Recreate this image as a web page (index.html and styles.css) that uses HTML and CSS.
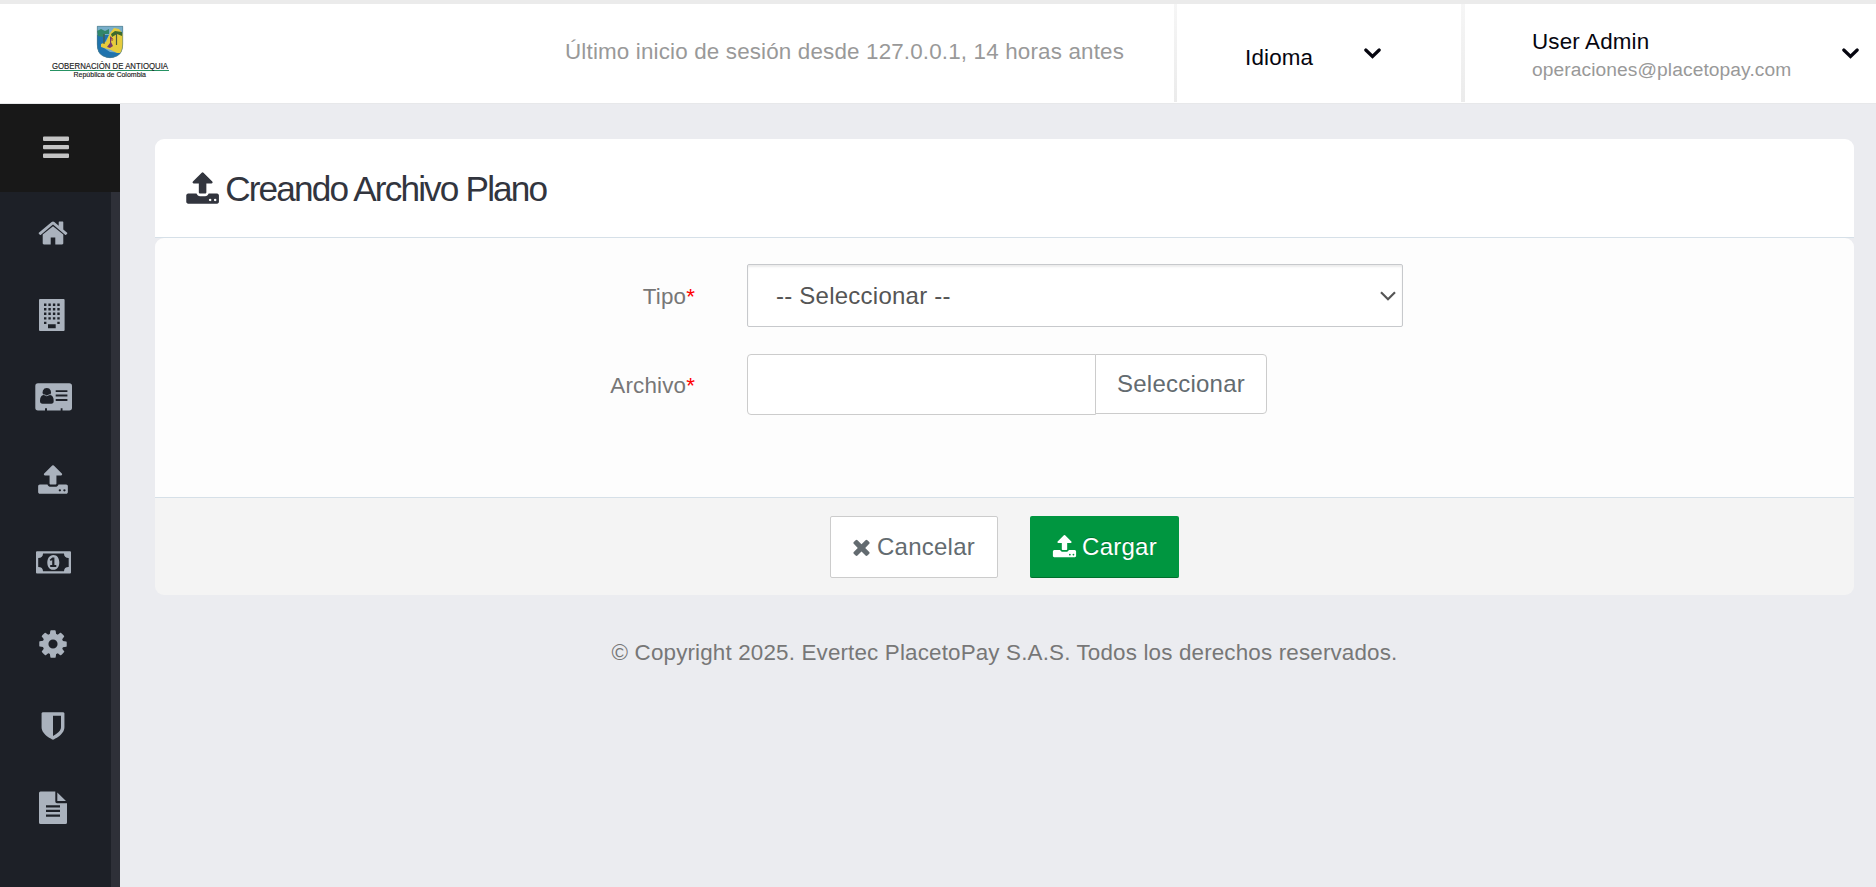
FILE: index.html
```html
<!DOCTYPE html>
<html lang="es">
<head>
<meta charset="utf-8">
<title>Creando Archivo Plano</title>
<link rel="stylesheet" href="styles.css">
</head>
<body>
<svg class="defs" aria-hidden="true">
  <symbol id="upload" viewBox="0 0 1792 1792"><path d="M1344 1472q0-26-19-45t-45-19-45 19-19 45 19 45 45 19 45-19 19-45zm256 0q0-26-19-45t-45-19-45 19-19 45 19 45 45 19 45-19 19-45zm128-224v320q0 40-28 68t-68 28h-1472q-40 0-68-28t-28-68v-320q0-40 28-68t68-28h427q21 56 70.500 92t110.500 36h256q61 0 110.500-36t70.500-92h427q40 0 68 28t28 68zm-325-648q-17 40-59 40h-256v448q0 26-19 45t-45 19h-256q-26 0-45-19t-19-45v-448h-256q-42 0-59-40-17-39 14-69l448-448q18-19 45-19t45 19l448 448q31 30 14 69z"/></symbol>
</svg>
<header class="topbar">
  <div class="brand">
    <svg class="logo" viewBox="0 0 120 56">
      <defs><clipPath id="shield"><path d="M47 0H73V18Q73 27 67 30Q63 32 60 32Q57 32 53 30Q47 27 47 18Z"/></clipPath></defs>
      <g clip-path="url(#shield)">
        <rect x="47" width="26" height="33" fill="#78aeca"/>
        <path d="M47 9H59L54 18L51 20L60 26L73 27V33H47Z" fill="#1f73ad"/>
        <path d="M56 16L60 7L64 2L69 3L73 8V27L67 27L61 24L51 21V18Z" fill="#e6cc3d"/>
        <path d="M47 5L51 3L55 5L59 3L59 8L55 8L53 11L48 10Z" fill="#30866b"/>
        <path d="M61 8L65 5L72 6V10L67 8L62 11Z" fill="#3d6b2c"/>
        <path d="M54 8V18M66.500 7V19" stroke="#4c5940" stroke-width="1.200" fill="none"/>
        <path d="M60 10L62 12L61 16L63 20L60 22L57 21L60 17Z" fill="#763c6b"/>
        <path d="M61 11L63 13L62 15" stroke="#b36535" fill="none"/>
      </g>
      <path d="M47.300 .3H72.700V18Q72.700 27 67 30Q63 31.700 60 31.700Q57 31.700 53 30Q47.300 27 47.300 18Z" fill="none" stroke="#527b85" stroke-width=".6"/>
      <rect x="0" y="44" width="119" height="1" fill="#269263"/>
      <text x="2" y="43" class="logo-name" textLength="116" lengthAdjust="spacingAndGlyphs">GOBERNACIÓN DE ANTIOQUIA</text>
      <text x="23.500" y="51.200" class="logo-sub" textLength="72.500" lengthAdjust="spacingAndGlyphs">República de Colombia</text>
    </svg>
  </div>
  <p class="last-login">Último inicio de sesión desde 127.0.0.1, 14 horas antes</p>
  <div class="language">
    <span>Idioma</span>
    <svg class="chev" viewBox="0 0 17 11"><path d="M1.800 2L8.500 8.500L15.200 2" /></svg>
  </div>
  <div class="user">
    <div class="user-info"><span class="user-name">User Admin</span><span class="user-mail">operaciones@placetopay.com</span></div>
    <svg class="chev" viewBox="0 0 17 11"><path d="M1.800 2L8.500 8.500L15.200 2" /></svg>
  </div>
</header>
<div class="shell">
  <aside class="side">
    <div class="toggle"><svg width="26" height="22" viewBox="0 0 26 22"><path d="M0 1.500Q0 .5 1 .5H25Q26 .5 26 1.500V4Q26 5 25 5H1Q0 5 0 4ZM0 10Q0 9 1 9H25Q26 9 26 10V12.300Q26 13.300 25 13.300H1Q0 13.300 0 12.300ZM0 18.500Q0 17.500 1 17.500H25Q26 17.500 26 18.500V21Q26 22 25 22H1Q0 22 0 21Z"/></svg></div>
    <nav class="menu">
      <a class="item"><svg class="ico" viewBox="0 0 1792 1792"><path d="M1472 992v480q0 26-19 45t-45 19h-384v-384h-256v384h-384q-26 0-45-19t-19-45v-480q0-1 .5-3t.5-3l575-474 575 474q1 2 1 6zm223-69l-62 74q-8 9-21 11h-3q-13 0-21-7l-692-577-692 577q-12 8-24 7-13-2-21-11l-62-74q-8-10-7-23.500t11-21.500l719-599q32-26 76-26t76 26l244 204v-195q0-14 9-23t23-9h192q14 0 23 9t9 23v408l219 182q10 8 11 21.500t-7 23.500z"/></svg></a>
      <a class="item"><svg class="ico wide" viewBox="0 0 40 32"><path fill-rule="evenodd" d="M7 0H30.600Q31.600 0 31.600 1V31Q31.600 32 30.600 32H7Q6 32 6 31V1Q6 0 7 0ZM11 4.500h2.400v2.400h-2.400zM15.400 4.500h2.400v2.400h-2.400zM19.900 4.500h2.400v2.400h-2.400zM24.300 4.500h2.400v2.400h-2.400zM11 9.100h2.400v2.400h-2.400zM15.400 9.100h2.400v2.400h-2.400zM19.900 9.100h2.400v2.400h-2.400zM24.300 9.100h2.400v2.400h-2.400zM11 13.600h2.400v2.400h-2.400zM15.400 13.600h2.400v2.400h-2.400zM19.900 13.600h2.400v2.400h-2.400zM24.300 13.600h2.400v2.400h-2.400zM11 18.200h2.400v2.400h-2.400zM15.400 18.200h2.400v2.400h-2.400zM19.900 18.200h2.400v2.400h-2.400zM24.300 18.200h2.400v2.400h-2.400zM11 22.700h2.400v2.400h-2.400zM24.300 22.700h2.400v2.400h-2.400zM15 25.200h7.700v4h-7.700z"/></svg></a>
      <a class="item"><svg class="ico wide" viewBox="0 0 40 32"><path fill-rule="evenodd" d="M5 2.300H36.300Q39 2.300 39 5V26.800Q39 29.500 36.300 29.500H29.500V27.300H27.700V29.500H14V27.300H12V29.500H5Q2.300 29.500 2.300 26.800V5Q2.300 2.300 5 2.300ZM22.700 9.200V11H34.400V9.200ZM22.700 13.600V15.500H34.400V13.600ZM22.700 18V20H34.400V18ZM13.800 7A4.200 4.200 0 0 0 10.600 14Q7 14.500 7 20Q7 22.700 9.500 22.700H18.300Q20.700 22.700 20.700 20Q20.700 14.500 17 14A4.200 4.200 0 0 0 13.800 7Z"/><path d="M10.400 13.400Q13.800 16.200 17.200 13.400" class="collar"/></svg></a>
      <a class="item"><svg class="ico"><use href="#upload"/></svg></a>
      <a class="item"><svg class="ico wide" viewBox="0 0 40 32"><path fill-rule="evenodd" d="M4 5.300H37Q38 5.300 38 6.300V26.600Q38 27.600 37 27.600H4Q3 27.600 3 26.600V6.300Q3 5.300 4 5.300ZM10 7.600Q10 12 5.200 12V20.900Q10 20.900 10 25.300H31Q31 20.900 35.700 20.900V12Q31 12 31 7.600Z"/><path fill-rule="evenodd" d="M20.300 9C24.500 9 26.300 12.600 26.300 16.400S24.500 23.700 20.300 23.700S14.300 20 14.300 16.400S16.300 9 20.300 9ZM19.300 11.500L16.700 13.800L17.800 15L19.200 14V19H17.200V20.900H23.300V19H21.400V11.500Z"/></svg></a>
      <a class="item"><svg class="ico" viewBox="0 0 1792 1792"><path d="M1152 896q0-106-75-181t-181-75-181 75-75 181 75 181 181 75 181-75 75-181zm512-109v222q0 12-8 23t-20 13l-185 28q-19 54-39 91 35 50 107 138 10 12 10 25t-9 23q-27 37-99 108t-94 71q-12 0-26-9l-138-108q-44 23-91 38-16 136-29 186-7 28-36 28h-222q-14 0-24.500-8.500t-11.500-21.500l-28-184q-49-16-90-37l-141 107q-10 9-25 9-14 0-25-11-126-114-165-168-7-10-7-23 0-12 8-23 15-21 51-66.500t54-70.500q-27-50-41-99l-183-27q-13-2-21-12.500t-8-23.500v-222q0-12 8-23t19-13l186-28q14-46 39-92-40-57-107-138-10-12-10-24 0-10 9-23 26-36 98.500-107.500t94.500-71.500q13 0 26 10l138 107q44-23 91-38 16-136 29-186 7-28 36-28h222q14 0 24.500 8.500t11.500 21.500l28 184q49 16 90 37l142-107q9-9 24-9 13 0 25 10 129 119 165 170 7 8 7 22 0 12-8 23-15 21-51 66.500t-54 70.500q26 50 41 98l183 28q13 2 21 12.500t8 23.500z"/></svg></a>
      <a class="item"><svg class="ico" viewBox="0 0 1792 1792"><path d="M1344 960v-640h-448v1137q119-63 213-137 235-184 235-360zm192-768v768q0 86-33.500 170.500t-83 150-118 127.500-126.500 103-121 77.500-89.500 49.500-42.500 20q-12 6-26 6t-26-6q-16-7-42.500-20t-89.500-49.500-121-77.500-126.500-103-118-127.500-83-150-33.500-170.500v-768q0-26 19-45t45-19h1152q26 0 45 19t19 45z"/></svg></a>
      <a class="item"><svg class="ico wide" viewBox="0 0 40 32"><path fill-rule="evenodd" d="M7.500 -.4H22.300V9.500Q22.300 11.200 24 11.200H34V30.500Q34 32 32.500 32H7.500Q6 32 6 30.500V1.100Q6 -.4 7.500 -.4ZM13 13.300V15.500H27V13.300ZM13 17.800V20H27V17.800ZM13 22.400V24.700H27V22.400ZM24.300 .5L33 9H24.300Z"/></svg></a>
    </nav>
  </aside>
  <main class="content">
    <section class="panel">
      <h1 class="panel-title"><svg class="title-ico"><use href="#upload"/></svg><span>Creando Archivo Plano</span></h1>
      <form class="panel-body">
        <div class="row">
          <label class="label" for="tipo">Tipo<b>*</b></label>
          <div class="select-wrap">
            <select id="tipo" class="select"><option>-- Seleccionar --</option></select>
            <svg class="select-arrow" width="16" height="10" viewBox="0 0 16 10"><path d="M1 1.300L8 8.200L15 1.300"/></svg>
          </div>
        </div>
        <div class="row file-row">
          <label class="label" for="archivo">Archivo<b>*</b></label>
          <div class="file"><input id="archivo" class="file-name" type="text"><button type="button" class="file-btn">Seleccionar</button></div>
        </div>
      </form>
      <div class="panel-foot">
        <button class="btn"><svg class="x-ico" viewBox="302 238 1188 1316"><path d="M1490 1322q0 40-28 68l-136 136q-28 28-68 28t-68-28l-294-294-294 294q-28 28-68 28t-68-28l-136-136q-28-28-28-68t28-68l294-294-294-294q-28-28-28-68t28-68l136-136q28-28 68-28t68 28l294 294 294-294q28-28 68-28t68 28l136 136q28 28 28 68t-28 68l-294 294 294 294q28 28 28 68z"/></svg><span>Cancelar</span></button>
        <button class="btn primary"><svg class="up-ico"><use href="#upload"/></svg><span>Cargar</span></button>
      </div>
    </section>
    <footer class="copy">© Copyright 2025. Evertec PlacetoPay S.A.S. Todos los derechos reservados.</footer>
  </main>
</div>
</body>
</html>
```
FILE: styles.css
```css
* { box-sizing: border-box; }
body {
  margin: 0;
  height: 887px;
  display: flex;
  flex-direction: column;
  overflow: hidden;
  background: #ebecf0;
  font-family: "Liberation Sans", Arial, sans-serif;
  font-size: 22.4px;
  letter-spacing: .16px;
  color: #777;
}
svg { display: block; flex: none; fill: currentColor; }
.defs { position: absolute; width: 0; height: 0; }

.topbar {
  display: flex;
  height: 104px;
  flex: none;
  background: #fff;
  border-top: 4px solid #ebebeb;
  border-bottom: 1px solid #e7e8ea;
}
.brand { width: 220px; padding: 22px 0 0 50px; }
.logo { width: 120px; height: 56px; overflow: visible; letter-spacing: 0; }
.logo-name { font-size: 8.6px; fill: #222; stroke: #222; stroke-width: .15px; }
.logo-sub { font-size: 7.4px; fill: #222; stroke: #222; stroke-width: .15px; }
.last-login {
  flex: 1;
  margin: 0;
  padding: 35px 50px 0 0;
  line-height: 26px;
  text-align: right;
  color: #999;
}
.language, .user {
  display: flex;
  color: #06060f;
  border-style: solid;
  border-width: 0 0 0 3px;
  border-image: linear-gradient(#f6f6f6, #ebebeb) 1;
  height: 98px;
}
.language { width: 287px; padding: 41px 0 0 68px; line-height: 26px; gap: 51px; }
.user { width: 415px; border-left-width: 4px; padding: 25px 17px 0 67px; justify-content: space-between; }
.user-info { display: flex; flex-direction: column; line-height: 26px; }
.user-mail { color: #999; font-size: 19.2px; line-height: 29px; letter-spacing: .09px; }
.chev { width: 17px; height: 11px; fill: none; stroke: currentColor; stroke-width: 3.200; stroke-linecap: round; margin-top: 3px; }
.user .chev { margin-top: 18.500px; }

.shell { flex: 1; display: flex; min-height: 0; }
.side { width: 120px; display: flex; flex-direction: column; background: #1d2027; }
.toggle { height: 88px; background: #181818; color: #c4c4c4; padding: 32px 0 0 43px; }
.menu { flex: 1; border-right: 9px solid #2e3038; color: #aab2bd; }
.item { height: 82.2px; padding-right: 5px; display: flex; align-items: center; justify-content: center; }
.ico { width: 32px; height: 32px; overflow: visible; }
.wide { width: 40px; }
.collar { fill: none; stroke: currentColor; stroke-width: .8; }

.content { flex: 1; padding: 35px 22px 0 35px; }
.panel { border-radius: 9px; }
.panel-title {
  margin: 0;
  height: 99px;
  padding: 2px 0 0 30px;
  display: flex;
  align-items: center;
  gap: 5px;
  background: #fff;
  border-bottom: 1px solid #d6e0e8;
  border-radius: 9px 9px 0 0;
  color: #32353e;
  font-size: 35.2px;
  font-weight: 400;
  letter-spacing: -1.85px;
}
.title-ico { width: 35.2px; height: 35.2px; }
.panel-body {
  height: 260px;
  padding-top: 26px;
  background: #fdfdfd;
  border-bottom: 1px solid #d6e0e8;
  border-radius: 9px 9px 0 0;
}
.row { display: flex; gap: 52px; }
.file-row { margin-top: 26px; }
.label { width: 540px; line-height: 65px; height: 64px; text-align: right; color: #777; }
.file-row .label { line-height: 64px; }
.label b { color: #f00; font-weight: 400; }
.select-wrap { display: grid; width: 656px; height: 63px; }
.select, .select-arrow { grid-area: 1 / 1; }
.select {
  appearance: none;
  width: 100%;
  height: 63px;
  padding: 0 28px;
  font: 24px "Liberation Sans", Arial, sans-serif;
  letter-spacing: .24px;
  color: #555;
  background: #fff;
  border: 1px solid #c7c9cc;
  border-radius: 2px;
  box-shadow: inset 0 2px 2px rgba(0, 0, 0, .08);
}
.select-arrow { align-self: center; justify-self: end; margin-right: 7px; fill: none; stroke: #555; stroke-width: 2.200; }
.file { display: flex; align-items: flex-start; }
.file-name { width: 349px; height: 61px; border: 1px solid #ccc; border-radius: 4px 0 0 4px; background: #fff; padding: 0 20px; }
.file-btn {
  width: 172px;
  height: 60px;
  margin-left: -1px;
  padding: 0;
  border: 1px solid #ccc;
  border-radius: 0 4px 4px 0;
  background: #fff;
  color: #636b70;
  font: 24px "Liberation Sans", Arial, sans-serif;
  letter-spacing: .24px;
}
.panel-foot {
  display: flex;
  justify-content: center;
  gap: 32px;
  height: 97px;
  padding-top: 18px;
  background: #f4f4f4;
  border-radius: 0 0 9px 9px;
}
.btn {
  display: flex;
  align-items: center;
  justify-content: center;
  gap: 7px;
  width: 168px;
  height: 62px;
  padding: 0;
  border: 1px solid #ccc;
  border-radius: 2px;
  background: #fff;
  color: #636b70;
  font: 24px "Liberation Sans", Arial, sans-serif;
  letter-spacing: .24px;
}
.x-ico { width: 17px; height: 18px; }
.primary {
  width: 149px;
  gap: 5px;
  border: 0;
  border-bottom: 1px solid #006f2c;
  background: #009640;
  color: #fff;
  text-shadow: 0 -1px 0 rgba(0, 0, 0, .25);
}
.up-ico { width: 25px; height: 25px; }
.copy { margin-top: 45px; line-height: 26px; text-align: center; }
```
